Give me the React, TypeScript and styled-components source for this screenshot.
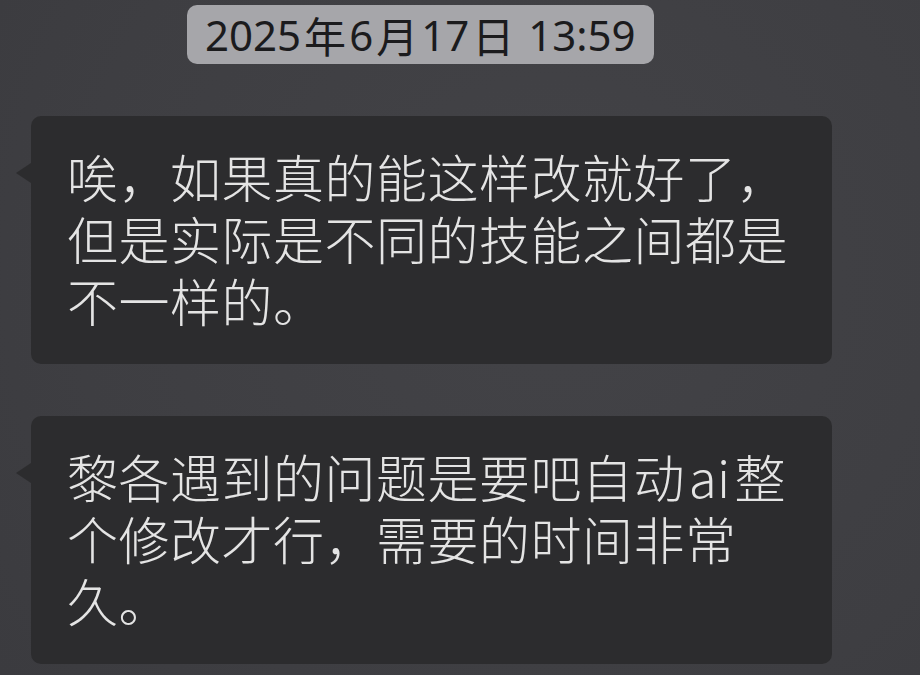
import styled, { createGlobalStyle } from 'styled-components';

const GlobalStyle = createGlobalStyle`
  html, body {
    margin: 0;
    padding: 0;
    background: #404044;
  }
  body {
    font-family: "Noto Sans", "Noto Sans CJK SC", sans-serif;
  }
`;

type Message = {
  id: number;
  lines: string;
};

const messages: Message[] = [
  { id: 1, lines: '唉，如果真的能这样改就好了，但是实际是不同的技能之间都是不一样的。' },
  { id: 2, lines: '黎各遇到的问题是要吧自动\u200Aai\u200A整个修改才行，需要的时间非常久。' },
];

const App = () => {
  return (
    <>
      <GlobalStyle />
      <Screen>
        <TimeRow>
          <TimePill>
            2025<Cjk>年</Cjk>6<Cjk>月</Cjk>17<Cjk>日</Cjk> 13:59
          </TimePill>
        </TimeRow>
        {messages.map((msg) => (
          <Bubble key={msg.id}>
            <BubbleText>{msg.lines}</BubbleText>
          </Bubble>
        ))}
      </Screen>
    </>
  );
};

const Screen = styled.main`
  width: 920px;
  height: 675px;
  overflow: hidden;
  display: flex;
  flex-direction: column;
  gap: 52px;
  padding: 5px 0 0 31px;
  box-sizing: border-box;
  background: radial-gradient(circle at 60% 40%, #434347 0%, #3e3e42 70%, #3b3b3f 100%);
`;

const TimeRow = styled.div`
  display: flex;
  padding-left: 156px;
`;

const TimePill = styled.div`
  height: 59px;
  display: flex;
  align-items: center;
  padding: 0 18px;
  border-radius: 10px;
  background: #a6a6aa;
  color: #1b1b1d;
  font-size: 42px;
  line-height: 1;
  white-space: pre;
`;

const Cjk = styled.span`
  font-family: "Noto Sans CJK SC", sans-serif;
  margin: 0 3px;
`;

const Bubble = styled.section`
  position: relative;
  width: 801px;
  height: 248px;
  box-sizing: border-box;
  padding: 29px 25px 0 36px;
  background: #2c2c2e;
  border-radius: 10px;

  &::before {
    content: '';
    position: absolute;
    left: -15px;
    top: 47px;
    border-top: 10px solid transparent;
    border-bottom: 10px solid transparent;
    border-right: 15px solid #2c2c2e;
  }
`;

const BubbleText = styled.p`
  margin: 0;
  font-family: "Noto Sans CJK SC", sans-serif;
  font-size: 51px;
  font-weight: 300;
  letter-spacing: 0.5px;
  line-height: 62px;
  color: #e4e4e4;
  line-break: strict;
`;

export default App;
